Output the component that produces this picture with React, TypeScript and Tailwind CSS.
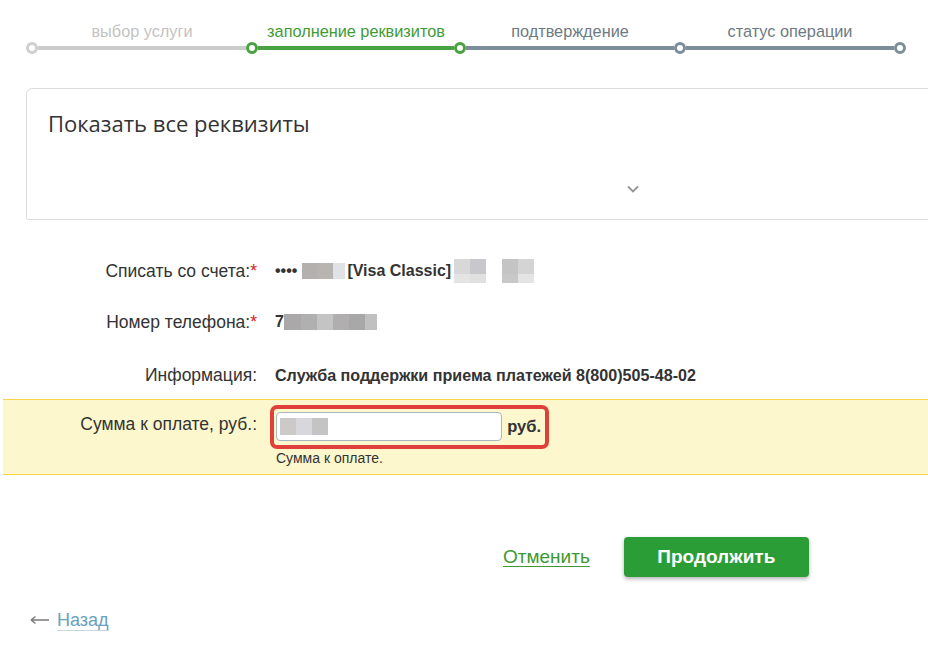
import React from "react";

function Blocks({ cells, h }: { cells: { w: number; c: string[] }[]; h: number[] }) {
  return (
    <div className="flex">
      {cells.map((cell, i) => (
        <div key={i} className="flex flex-col" style={{ width: cell.w }}>
          {cell.c.map((c, j) => (
            <div key={j} style={{ height: h[j], backgroundColor: c }} />
          ))}
        </div>
      ))}
    </div>
  );
}

export default function App() {
  return (
    <div
      className="w-[928px] h-[652px] overflow-hidden bg-white text-[#333]"
      style={{ fontFamily: '"Liberation Sans", Arial, sans-serif' }}
    >
      {/* Step bar */}
      <div className="pt-[22px] pl-[26px]">
        <div className="flex h-[18px] items-center text-[16.3px] leading-[18px]">
          <div className="w-[226px] text-center pl-[6px] text-[#c3c3c3]">выбор услуги</div>
          <div className="w-[208px] text-center text-[#3f9b36]">заполнение реквизитов</div>
          <div className="w-[220px] text-center text-[#6e7a82]">подтверждение</div>
          <div className="w-[220px] text-center text-[#6e7a82]">статус операции</div>
        </div>
        <div className="mt-[2px] flex items-center h-[12px]">
          <div className="w-[12px] h-[12px] rounded-full border-[3px] border-[#cfcfcf] bg-white shrink-0" />
          <div className="w-[208px] h-[4px] bg-[#cccccc]" />
          <div className="w-[12px] h-[12px] rounded-full border-[3px] border-[#48a23f] bg-white shrink-0" />
          <div className="w-[196px] h-[4px] bg-[#48a23f]" />
          <div className="w-[12px] h-[12px] rounded-full border-[3px] border-[#48a23f] bg-white shrink-0" />
          <div className="w-[208px] h-[4px] bg-[#7b8e9a]" />
          <div className="w-[12px] h-[12px] rounded-full border-[3px] border-[#7b8e9a] bg-white shrink-0" />
          <div className="w-[208px] h-[4px] bg-[#7b8e9a]" />
          <div className="w-[12px] h-[12px] rounded-full border-[3px] border-[#7b8e9a] bg-white shrink-0" />
        </div>
      </div>

      {/* Card */}
      <div className="mt-[34px] ml-[26px] w-[940px] h-[132px] border border-[#dddddd] rounded-tl-[6px] rounded-bl-[2px] flex flex-col">
        <div
          className="pt-[19px] pl-[21px] text-[22px] leading-[30px] text-[#333]"
          style={{ fontFamily: '"Open Sans", sans-serif' }}
        >
          Показать все реквизиты
        </div>
        <div className="mt-[47px] ml-[600px]">
          <svg width="12" height="8" viewBox="0 0 12 8">
            <path d="M1 1.5 L6 6.5 L11 1.5" fill="none" stroke="#959595" strokeWidth="1.8" />
          </svg>
        </div>
      </div>

      {/* Form rows */}
      <div className="mt-[40px]">
        <div className="flex items-center h-[22px]">
          <div className="w-[257px] text-right text-[17.5px]">
            Списать со счета:<span className="text-[#d9221c]">*</span>
          </div>
          <div className="ml-[18px] flex items-center font-bold text-[16px]">
            <span>••••</span>
            <div className="ml-[5px]">
              <Blocks cells={[{ w: 15, c: ["#b4b0ae"] }, { w: 16, c: ["#b8b4b2"] }, { w: 12, c: ["#e0e2e6"] }]} h={[16]} />
            </div>
            <span className="ml-[2px]">[Visa Classic]</span>
            <div className="ml-[3px]">
              <Blocks cells={[{ w: 16, c: ["#d8d8d8", "#e4e4e4"] }, { w: 16, c: ["#c8c8cc", "#e0e0e0"] }]} h={[15, 9]} />
            </div>
            <div className="ml-[16px]">
              <Blocks cells={[{ w: 16, c: ["#c4c4c4", "#c8c8c8"] }, { w: 16, c: ["#d4d4d4", "#e4e4e4"] }]} h={[15, 9]} />
            </div>
          </div>
        </div>

        <div className="mt-[29px] flex items-center h-[22px]">
          <div className="w-[257px] text-right text-[17.5px]">
            Номер телефона:<span className="text-[#d9221c]">*</span>
          </div>
          <div className="ml-[18px] flex items-center font-bold text-[16px]">
            <span>7</span>
            <Blocks
              cells={[
                { w: 17, c: ["#aaa8a8"] },
                { w: 16, c: ["#b0b0b0"] },
                { w: 16, c: ["#c4c4c4"] },
                { w: 16, c: ["#b0aeae"] },
                { w: 16, c: ["#a8a8a8"] },
                { w: 12, c: ["#c0c0c0"] },
              ]}
              h={[16]}
            />
          </div>
        </div>

        <div className="mt-[31px] flex items-center h-[22px]">
          <div className="w-[257px] text-right text-[17.5px]">Информация:</div>
          <div className="ml-[18px] font-bold text-[16.1px]">
            Служба поддержки приема платежей 8(800)505-48-02
          </div>
        </div>

        {/* Yellow band */}
        <div className="mt-[13px] ml-[3px] border-y border-[#f6d54a] bg-[#fcf7cd] pt-[5px] pb-[8px] flex">
          <div className="w-[254px] text-right text-[17.5px] leading-[20px] mt-[9px]">Сумма к оплате, руб.:</div>
          <div className="ml-[13px] flex flex-col">
            <div className="border-[4px] border-[#e0403a] rounded-[7px] pl-[2px] pr-[4px] pt-[3px] pb-[4px] flex items-center w-[279px]">
              <div className="w-[227px] h-[29px] bg-white border border-[#a9b6c2] rounded-[4px] flex items-center pl-[3px]">
                <Blocks cells={[{ w: 16, c: ["#cccac8"] }, { w: 16, c: ["#d8d8dc"] }, { w: 16, c: ["#c4c4c4"] }]} h={[17]} />
              </div>
              <span className="ml-[5px] font-bold text-[16.5px]">руб.</span>
            </div>
            <div className="ml-[6px] mt-[1px] text-[14px] leading-[16px] text-[#333]">Сумма к оплате.</div>
          </div>
        </div>
      </div>

      {/* Buttons */}
      <div className="mt-[62px] flex items-center">
        <a className="ml-[503px] text-[19px] text-[#3d9a30] underline underline-offset-[3px]" href="#">
          Отменить
        </a>
        <button className="ml-[34px] w-[185px] h-[40px] rounded-[4px] bg-[#2a9d36] text-white font-bold text-[19px] shadow-[0_2px_4px_rgba(0,0,0,0.3)]">
          Продолжить
        </button>
      </div>

      {/* Back */}
      <div className="mt-[33px] ml-[30px] flex items-center h-[20px]">
        <svg width="19" height="10" viewBox="0 0 19 10">
          <path d="M1 5 H19 M1 5 L5.5 1.5 M1 5 L5.5 8.5" fill="none" stroke="#7a7a7a" strokeWidth="1.5" />
        </svg>
        <a
          className="ml-[8px] text-[18px] text-[#6a9fc0] border-b border-[#c8d6de] leading-[20px]"
          href="#"
        >
          Назад
        </a>
      </div>
    </div>
  );
}
